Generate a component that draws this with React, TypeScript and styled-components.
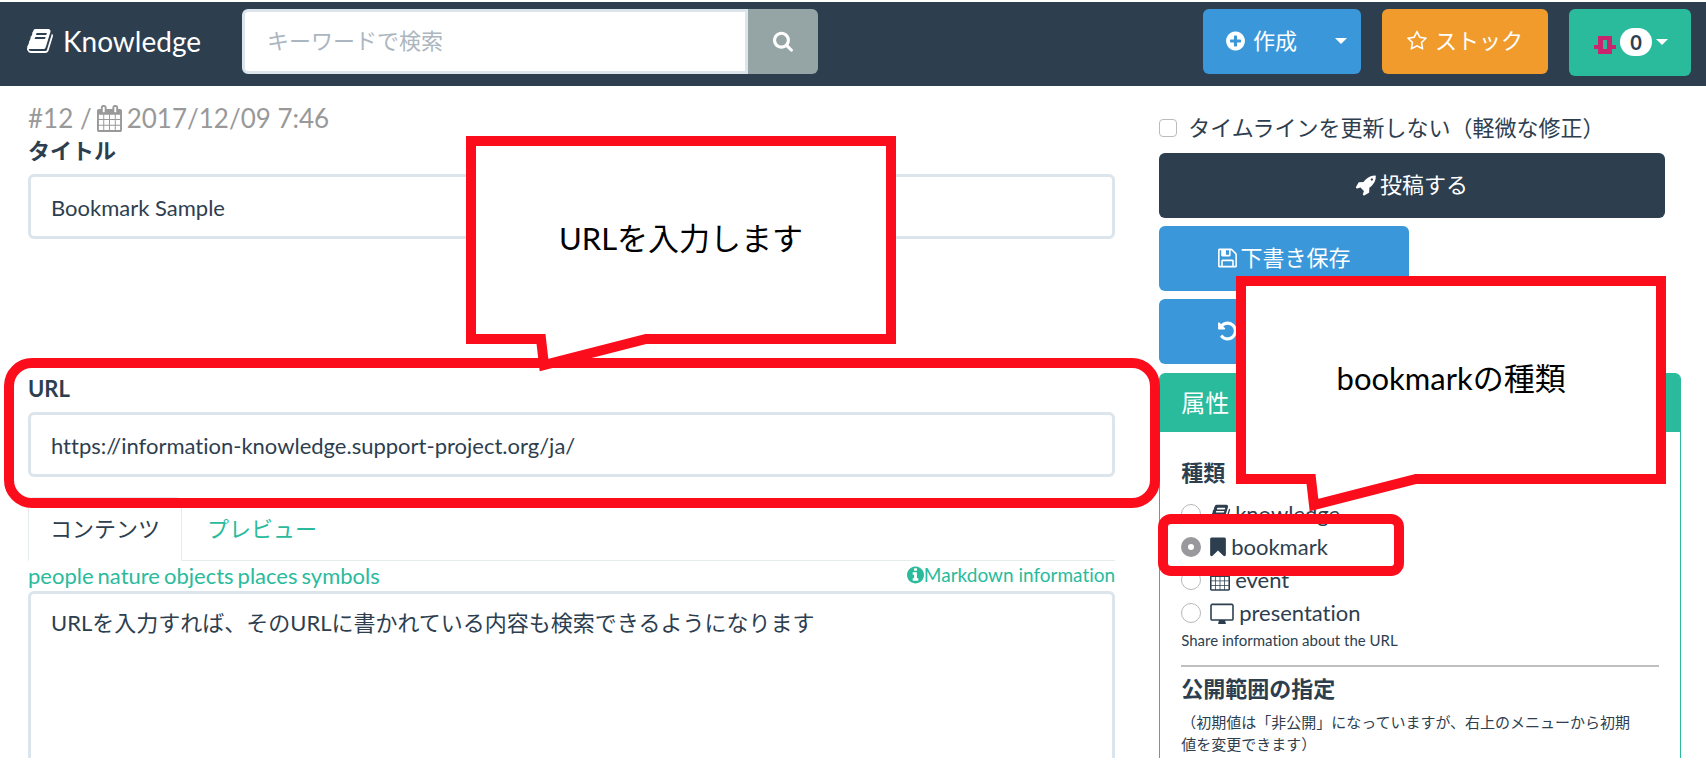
import React from "react";
import styled, { createGlobalStyle } from "styled-components";

const color = {
  ink: "#2d3e4f",
  blue: "#3a98da",
  orange: "#f09b2c",
  green: "#29bb9c",
  gray: "#95a5a5",
  line: "#dce4ec",
  muted: "#999999",
  mark: "#fc0d1b",
};

const GlobalStyle = createGlobalStyle`
  *, *::before, *::after { box-sizing: border-box; }
  html, body { margin: 0; background: #fff; overflow: hidden; }
  body, button, input, textarea {
    font-family: Lato, "Noto Sans CJK JP", sans-serif;
    font-size: 22px;
    line-height: 32px;
    font-variant-ligatures: none;
    color: ${color.ink};
  }
  a { color: ${color.green}; text-decoration: none; }
`;

/* Icons on a 1792-unit grid; x and w give the glyph's own horizontal extent. */
const icons = {
  book: {
    x: 62, w: 1668,
    d: "M1703 478q40 57 18 129l-275 906q-19 64-76.5 107.5t-122.5 43.5h-923q-77 0-148.5-53.5t-99.5-131.5q-24-67-2-127 0-4 3-27t4-37q1-8-3-21.5t-3-19.5q2-11 8-21t16.5-23.5 16.5-23.5q23-38 45-91.5t30-91.5q3-10 .5-30t-.5-28q3-11 17-28t17-23q21-36 42-92t25-90q1-9-2.5-32t.5-28q4-13 22-30.5t22-22.5q19-26 42.5-84.5t27.5-96.5q1-8-3-25.5t-2-26.5q2-8 9-18t18-23 17-21q8-12 16.5-30.5t15-35 16-36 19.5-32 26.5-23.5 36-11.5 47.5 5.5l-1 3q38-9 51-9h761q74 0 114 56t18 130l-274 906q-36 119-71.5 153.5t-128.5 34.5h-869q-27 0-38 15-11 16-1 43 24 70 144 70h923q29 0 56-15.5t35-41.5l300-987q7-22 5-57 38 15 59 43zm-1064 2q-4 13 2 22.5t20 9.5h608q13 0 25.5-9.5t16.5-22.5l21-64q4-13-2-22.5t-20-9.5h-608q-13 0-25.5 9.5t-16.5 22.5zm-83 256q-4 13 2 22.5t20 9.5h608q13 0 25.5-9.5t16.5-22.5l21-64q4-13-2-22.5t-20-9.5h-608q-13 0-25.5 9.5t-16.5 22.5z",
  },
  search: {
    x: 64, w: 1664,
    d: "M1216 832q0-185-131.5-316.5t-316.5-131.5-316.5 131.5-131.5 316.5 131.5 316.5 316.5 131.5 316.5-131.5 131.5-316.5zm512 832q0 52-38 90t-90 38q-54 0-90-38l-343-342q-179 124-399 124-143 0-273.5-55.5t-225-150-150-225-55.5-273.5 55.5-273.5 150-225 225-150 273.5-55.5 273.5 55.5 225 150 150 225 55.5 273.5q0 220-124 399l343 343q37 37 37 90z",
  },
  plus: {
    x: 128, w: 1536,
    d: "M1344 960v-128q0-26-19-45t-45-19h-256v-256q0-26-19-45t-45-19h-128q-26 0-45 19t-19 45v256h-256q-26 0-45 19t-19 45v128q0 26 19 45t45 19h256v256q0 26 19 45t45 19h128q26 0 45-19t19-45v-256h256q26 0 45-19t19-45zm320-64q0 209-103 385.5t-279.5 279.5-385.5 103-385.5-103-279.5-279.5-103-385.5 103-385.5 279.5-279.5 385.5-103 385.5 103 279.5 279.5 103 385.5z",
  },
  star: {
    x: 64, w: 1664,
    d: "M1201 1004l306-297-422-62-189-382-189 382-422 62 306 297-73 421 378-199 377 199zm527-357q0 22-26 48l-363 354 86 500q1 7 1 20 0 50-41 50-19 0-40-12l-449-236-449 236q-22 12-40 12-21 0-31.5-14.5t-10.5-35.5q0-6 2-20l86-500-364-354q-25-27-25-48 0-37 56-46l502-73 225-455q19-41 49-41t49 41l225 455 502 73q56 9 56 46z",
  },
  calendar: {
    x: 64, w: 1664,
    d: "M192 1664h288v-288h-288v288zm352 0h320v-288h-320v288zm-352-352h288v-320h-288v320zm352 0h320v-320h-320v320zm-352-384h288v-288h-288v288zm736 736h320v-288h-320v288zm-384-736h320v-288h-320v288zm768 736h288v-288h-288v288zm-384-352h320v-320h-320v320zm-352-864v-288q0-13-9.5-22.5t-22.5-9.5h-64q-13 0-22.5 9.5t-9.5 22.5v288q0 13 9.5 22.5t22.5 9.5h64q13 0 22.5-9.5t9.5-22.5zm736 864h288v-320h-288v320zm-384-384h320v-288h-320v288zm384 0h288v-288h-288v288zm32-480v-288q0-13-9.5-22.5t-22.5-9.5h-64q-13 0-22.5 9.5t-9.5 22.5v288q0 13 9.5 22.5t22.5 9.5h64q13 0 22.5-9.5t9.5-22.5zm384-64v1280q0 52-38 90t-90 38h-1408q-52 0-90-38t-38-90v-1280q0-52 38-90t90-38h128v-96q0-66 47-113t113-47h64q66 0 113 47t47 113v96h384v-96q0-66 47-113t113-47h64q66 0 113 47t47 113v96h128q52 0 90 38t38 90z",
  },
  rocket: {
    x: 64, w: 1600,
    d: "M1440 448q0-40-28-68t-68-28-68 28-28 68 28 68 68 28 68-28 28-68zm224-288q0 249-75.5 430.5t-253.5 360.5q-81 80-195 176l-20 379q-2 16-16 26l-384 224q-7 4-16 4-12 0-23-9l-64-64q-13-14-8-32l85-276-281-281-276 85q-3 1-9 1-14 0-23-9l-64-64q-17-19-5-39l224-384q10-14 26-16l379-20q96-114 176-195 188-187 358-258t431-71q14 0 24 9.5t10 22.5z",
  },
  floppy: {
    x: 128, w: 1536,
    d: "M512 1536h768v-384h-768v384zm896 0h128v-896q0-14-10-38.5t-20-34.5l-281-281q-10-10-34-20t-39-10v416q0 40-28 68t-68 28h-576q-40 0-68-28t-28-68v-416h-128v1280h128v-416q0-40 28-68t68-28h832q40 0 68 28t28 68v416zm-384-928v-320q0-13-9.5-22.5t-22.5-9.5h-192q-13 0-22.5 9.5t-9.5 22.5v320q0 13 9.5 22.5t22.5 9.5h192q13 0 22.5-9.5t9.5-22.5zm640 32v928q0 40-28 68t-68 28h-1344q-40 0-68-28t-28-68v-1344q0-40 28-68t68-28h928q40 0 88 20t76 48l280 280q28 28 48 76t20 88z",
  },
  undo: {
    x: 128, w: 1536,
    d: "M1664 896q0 156-61 298t-164 245-245 164-298 61q-172 0-327-72.5t-264-204.5q-7-10-6.5-22.5t8.5-20.5l137-138q10-9 25-9 16 2 23 12 73 95 179 147t225 52q104 0 198.5-40.5t163.5-109.5 109.5-163.5 40.5-198.5-40.5-198.5-109.5-163.5-163.5-109.5-198.5-40.5q-98 0-188 35.5t-160 101.5l137 138q31 30 14 69-17 40-59 40h-448q-26 0-45-19t-19-45v-448q0-42 40-59 39-17 69 14l130 129q107-101 244.5-156.5t284.5-55.5q156 0 298 61t245 164 164 245 61 298z",
  },
  bookmark: {
    x: 256, w: 1280,
    d: "M1420 128q23 0 44 9 33 13 52.5 41t19.5 62v1289q0 34-19.5 62t-52.5 41q-19 8-44 8-48 0-83-32l-441-424-441 424q-36 33-83 33-23 0-44-9-33-13-52.5-41t-19.5-62v-1289q0-34 19.5-62t52.5-41q21-9 44-9h1048z",
  },
  info: {
    x: 128, w: 1536,
    d: "M1152 1376v-160q0-14-9-23t-23-9h-96v-512q0-14-9-23t-23-9h-320q-14 0-23 9t-9 23v160q0 14 9 23t23 9h96v320h-96q-14 0-23 9t-9 23v160q0 14 9 23t23 9h448q14 0 23-9t9-23zm-128-896v-160q0-14-9-23t-23-9h-192q-14 0-23 9t-9 23v160q0 14 9 23t23 9h192q14 0 23-9t9-23zm640 416q0 209-103 385.5t-279.5 279.5-385.5 103-385.5-103-279.5-279.5-103-385.5 103-385.5 279.5-279.5 385.5-103 385.5 103 279.5 279.5 103 385.5z",
  },
  desktop: {
    x: 0, w: 1920,
    d: "M160 128h1600q66 0 113 47t47 113v1088q0 66-47 113t-113 47h-544q0 37 16 77.5t32 71 16 43.5q0 26-19 45t-45 19h-512q-26 0-45-19t-19-45q0-14 16-44t32-70 16-78h-544q-66 0-113-47t-47-113v-1088q0-66 47-113t113-47zm0 128q-13 0-22.5 9.5t-9.5 22.5v1088q0 13 9.5 22.5t22.5 9.5h1600q13 0 22.5-9.5t9.5-22.5v-1088q0-13-9.5-22.5t-22.5-9.5z",
  },
};

type IconName = keyof typeof icons;

function Icon({ name, size = 22 }: { name: IconName; size?: number }) {
  const { x, w, d } = icons[name];
  return (
    <svg
      width={Math.round((w * size) / 1792)}
      height={size}
      viewBox={`${x} 0 ${w} 1792`}
      fill="currentColor"
      fillRule={name === "desktop" ? "evenodd" : "nonzero"}
      aria-hidden="true"
    >
      <path d={d} />
    </svg>
  );
}

const Page = styled.div`
  height: calc(100vh - 10px);
  padding-top: 2px;
  overflow: hidden;
`;

const Navbar = styled.header`
  display: flex;
  align-items: flex-start;
  height: 84px;
  padding: 7px 15px 0 27px;
  background: ${color.ink};
`;

const Brand = styled.a`
  display: flex;
  align-items: center;
  gap: 10px;
  width: 215px;
  height: 64px;
  && { color: #fff; }
  font-size: 28px;
`;

const SearchForm = styled.form`
  display: flex;
  width: 576px;
`;

const TextInput = styled.input`
  display: block;
  width: 100%;
  height: 65px;
  padding: 1px 20px 0;
  border: 3px solid ${color.line};
  border-radius: 6px;
  background: #fff;
  outline: none;
  &::placeholder { color: #acb6c0; opacity: 1; }
`;

const SearchInput = styled(TextInput)`
  flex: 1;
  border-radius: 6px 0 0 6px;
  padding: 0 22px 2px;
`;

const Button = styled.button<{ $tone: string }>`
  display: flex;
  align-items: center;
  justify-content: center;
  height: 65px;
  padding: 0 0 1px;
  border: 0;
  border-radius: 6px;
  background: ${(p) => p.$tone};
  color: #fff;
`;

const SearchButton = styled(Button)`
  width: 70px;
  border-radius: 0 6px 6px 0;
`;

const NavActions = styled.div`
  display: flex;
  gap: 21px;
  margin-left: auto;
`;

const SplitButton = styled.div`
  display: flex;
`;

const CreateButton = styled(Button)`
  width: 117px;
  gap: 8px;
  border-radius: 6px 0 0 6px;
`;

const CreateMenuButton = styled(Button)`
  width: 41px;
  border-radius: 0 6px 6px 0;
`;

const StockButton = styled(Button)`
  width: 166px;
  gap: 8px;
`;

const AccountButton = styled(Button)`
  width: 122px;
  height: 67px;
  gap: 4px;
  padding-left: 2px;
`;

const Caret = styled.span`
  border: 6px solid transparent;
  border-top-color: #fff;
  border-bottom: 0;
`;

const CountBadge = styled.span`
  width: 32px;
  border-radius: 14px;
  background: #fff;
  color: ${color.ink};
  font-size: 20px;
  font-weight: 700;
  line-height: 28px;
  text-align: center;
`;

const Columns = styled.div`
  display: grid;
  grid-template-columns: minmax(0, 25fr) minmax(0, 12fr);
  gap: 44px;
  padding: 16px 25px 0 28px;
`;

const Editor = styled.main`
  display: flex;
  flex-direction: column;
`;

const Meta = styled.div`
  display: flex;
  align-items: center;
  gap: 5px;
  color: ${color.muted};
  font-size: 26px;
`;

const FieldLabel = styled.label`
  display: block;
  padding-bottom: 6px;
  font-weight: 700;
  line-height: 34px;
`;

const UrlField = styled.div`
  position: relative;
  margin-top: 133px;
`;

const TabBar = styled.div`
  display: flex;
  gap: 3px;
  height: 64px;
  margin-top: 20px;
  border-bottom: 1px solid #e4ecee;
`;

const Tab = styled.a<{ $active?: boolean }>`
  height: 64px;
  padding: 15px 21px;
  border: 1px solid ${(p) => (p.$active ? "#e4ecee" : "transparent")};
  border-bottom-color: ${(p) => (p.$active ? "#fff" : "transparent")};
  border-radius: 6px 6px 0 0;
  && { color: ${(p) => (p.$active ? color.ink : color.green)}; }
`;

const EditorLinks = styled.div`
  display: flex;
  justify-content: space-between;
  line-height: 30px;
`;

const LinkGroup = styled.nav`
  display: flex;
  gap: 4px;
`;

const HelpLink = styled.a`
  display: flex;
  align-items: center;
  align-self: flex-start;
  font-size: 19px;
  line-height: 28px;
`;

const TextArea = styled.textarea`
  display: block;
  width: 100%;
  height: 300px;
  padding: 13px 20px;
  border: 3px solid ${color.line};
  border-radius: 6px;
  outline: none;
  resize: none;
`;

const Sidebar = styled.aside`
  display: flex;
  flex-direction: column;
  gap: 9px;
  padding-top: 10px;
`;

const CheckLabel = styled.label`
  display: flex;
  align-items: center;
  gap: 11px;
`;

const CheckBox = styled.input`
  appearance: none;
  width: 18px;
  height: 18px;
  margin: 0;
  border: 1px solid #bcbcbc;
  border-radius: 4px;
  background: #fff;
`;

const ActionGrid = styled.div`
  display: grid;
  grid-template-columns: 1fr 1fr;
  gap: 8px 6px;
  padding-right: 16px;
`;

const ActionButton = styled(Button)<{ $wide?: boolean }>`
  grid-column: ${(p) => (p.$wide ? "1 / -1" : "1")};
  gap: 4px;
`;

const Panel = styled.section`
  border: 1px solid ${color.green};
  border-radius: 6px 6px 0 0;
`;

const PanelTitle = styled.h2`
  margin: 0;
  padding: 12px 21px 13px;
  border-radius: 4px 4px 0 0;
  background: ${color.green};
  color: #fff;
  font-size: 24px;
  font-weight: 400;
  line-height: 33px;
`;

const PanelBody = styled.div`
  padding: 25px 21px;
`;

const GroupTitle = styled.h3`
  margin: 0;
  font-size: 22px;
  font-weight: 700;
  line-height: 32px;
`;

const KindList = styled.div`
  display: flex;
  flex-direction: column;
  padding-top: 8px;
`;

const KindRow = styled.div`
  position: relative;
`;

const KindLabel = styled.label`
  display: flex;
  align-items: center;
  gap: 5px;
  line-height: 33px;
`;

const Radio = styled.input`
  appearance: none;
  width: 20px;
  height: 20px;
  margin: 0 4px 0 0;
  border: 1px solid #b8b8b8;
  border-radius: 50%;
  background: #fff;
  &:checked { border: 7px solid #98989d; }
`;

const Note = styled.p`
  margin: 0;
  font-size: 15px;
  line-height: 22px;
`;

const ScopeNote = styled(Note)`
  padding: 6px 16px 0 0;
`;

const Divider = styled.hr`
  height: 2px;
  margin: 14px 0 6px;
  border: 0;
  background: #c0c0c0;
`;

const UrlHighlight = styled.div`
  position: absolute;
  z-index: 1;
  inset: -14px -45px -31px -24px;
  border: 10px solid ${color.mark};
  border-radius: 28px;
  pointer-events: none;
`;

const KindHighlight = styled.div`
  position: absolute;
  z-index: 1;
  top: -16px;
  left: -23px;
  width: 246px;
  height: 62px;
  border: 10px solid ${color.mark};
  border-radius: 13px;
  pointer-events: none;
`;

const CalloutBox = styled.div<{ $left: number; $bottom: number }>`
  position: absolute;
  z-index: 2;
  left: ${(p) => p.$left}px;
  bottom: ${(p) => p.$bottom}px;
  width: 430px;
  height: 236px;
  color: #000;
  font-size: 31px;
`;

const CalloutShape = styled.svg`
  display: block;
`;

const CalloutText = styled.div`
  position: absolute;
  inset: 0 0 33px;
  display: flex;
  align-items: center;
  justify-content: center;
`;

function Callout({ left, bottom, text }: { left: number; bottom: number; text: string }) {
  return (
    <CalloutBox $left={left} $bottom={bottom}>
      <CalloutShape width="430" height="236" viewBox="0 0 430 236" aria-hidden="true">
        <path
          d="M5 5H425V203H180L78 229L75 203H5Z"
          fill="#fff"
          stroke={color.mark}
          strokeWidth="10"
        />
      </CalloutShape>
      <CalloutText>{text}</CalloutText>
    </CalloutBox>
  );
}

const kinds: { icon: IconName; name: string }[] = [
  { icon: "book", name: "knowledge" },
  { icon: "bookmark", name: "bookmark" },
  { icon: "calendar", name: "event" },
  { icon: "desktop", name: "presentation" },
];
const symbolGroups = ["people", "nature", "objects", "places", "symbols"];

export default function App() {
  return (
    <Page>
      <GlobalStyle />
      <Navbar>
        <Brand href="#">
          <Icon name="book" size={28} />
          Knowledge
        </Brand>
        <SearchForm>
          <SearchInput type="text" placeholder="キーワードで検索" aria-label="キーワードで検索" />
          <SearchButton type="button" $tone={color.gray} aria-label="検索">
            <Icon name="search" />
          </SearchButton>
        </SearchForm>
        <NavActions>
          <SplitButton>
            <CreateButton type="button" $tone={color.blue}>
              <Icon name="plus" />
              作成
            </CreateButton>
            <CreateMenuButton type="button" $tone={color.blue} aria-label="作成メニュー">
              <Caret />
            </CreateMenuButton>
          </SplitButton>
          <StockButton type="button" $tone={color.orange}>
            <Icon name="star" />
            ストック
          </StockButton>
          <AccountButton type="button" $tone={color.green}>
            <svg width="22" height="26" viewBox="0 0 22 26" aria-hidden="true">
              <path
                d="M4 7H18V16H22V20H18V25H4V20H0V16H4ZM9 11V20H13V11Z"
                fill="#c9246e"
                fillRule="evenodd"
              />
            </svg>
            <CountBadge>0</CountBadge>
            <Caret />
          </AccountButton>
        </NavActions>
      </Navbar>

      <Columns>
        <Editor>
          <Meta>
            #12 /
            <Icon name="calendar" size={27} />
            2017/12/09 7:46
          </Meta>
          <FieldLabel htmlFor="title">タイトル</FieldLabel>
          <TextInput id="title" type="text" defaultValue="Bookmark Sample" />
          <UrlField>
            <FieldLabel htmlFor="url">URL</FieldLabel>
            <TextInput id="url" type="text" defaultValue="https://information-knowledge.support-project.org/ja/" />
            <UrlHighlight />
            <Callout left={438} bottom={105} text="URLを入力します" />
          </UrlField>
          <TabBar>
            <Tab href="#content" $active>コンテンツ</Tab>
            <Tab href="#preview">プレビュー</Tab>
          </TabBar>
          <EditorLinks>
            <LinkGroup>
              {symbolGroups.map((name) => (
                <a key={name} href={`#${name}`}>{name}</a>
              ))}
            </LinkGroup>
            <HelpLink href="#markdown">
              <Icon name="info" size={20} />
              Markdown information
            </HelpLink>
          </EditorLinks>
          <TextArea
            aria-label="コンテンツ"
            defaultValue="URLを入力すれば、そのURLに書かれている内容も検索できるようになります"
          />
        </Editor>

        <Sidebar>
          <CheckLabel>
            <CheckBox type="checkbox" />
            タイムラインを更新しない（軽微な修正）
          </CheckLabel>
          <ActionGrid>
            <ActionButton type="button" $tone={color.ink} $wide>
              <Icon name="rocket" />
              投稿する
            </ActionButton>
            <ActionButton type="button" $tone={color.blue}>
              <Icon name="floppy" />
              下書き保存
            </ActionButton>
            <ActionButton type="button" $tone={color.blue}>
              <Icon name="undo" />
              キャンセル
            </ActionButton>
          </ActionGrid>
          <Panel>
            <PanelTitle>属性</PanelTitle>
            <PanelBody>
              <GroupTitle>種類</GroupTitle>
              <KindList>
                {kinds.map(({ icon, name }) => (
                  <KindRow key={name}>
                    <KindLabel>
                      <Radio type="radio" name="kind" defaultChecked={name === "bookmark"} />
                      <Icon name={icon} />
                      {name}
                    </KindLabel>
                    {name === "bookmark" && (
                      <>
                        <KindHighlight />
                        <Callout left={55} bottom={51} text="bookmarkの種類" />
                      </>
                    )}
                  </KindRow>
                ))}
              </KindList>
              <Note>Share information about the URL</Note>
              <Divider />
              <GroupTitle>公開範囲の指定</GroupTitle>
              <ScopeNote>
                （初期値は「非公開」になっていますが、右上のメニューから初期値を変更できます）
              </ScopeNote>
            </PanelBody>
          </Panel>
        </Sidebar>
      </Columns>
    </Page>
  );
}
